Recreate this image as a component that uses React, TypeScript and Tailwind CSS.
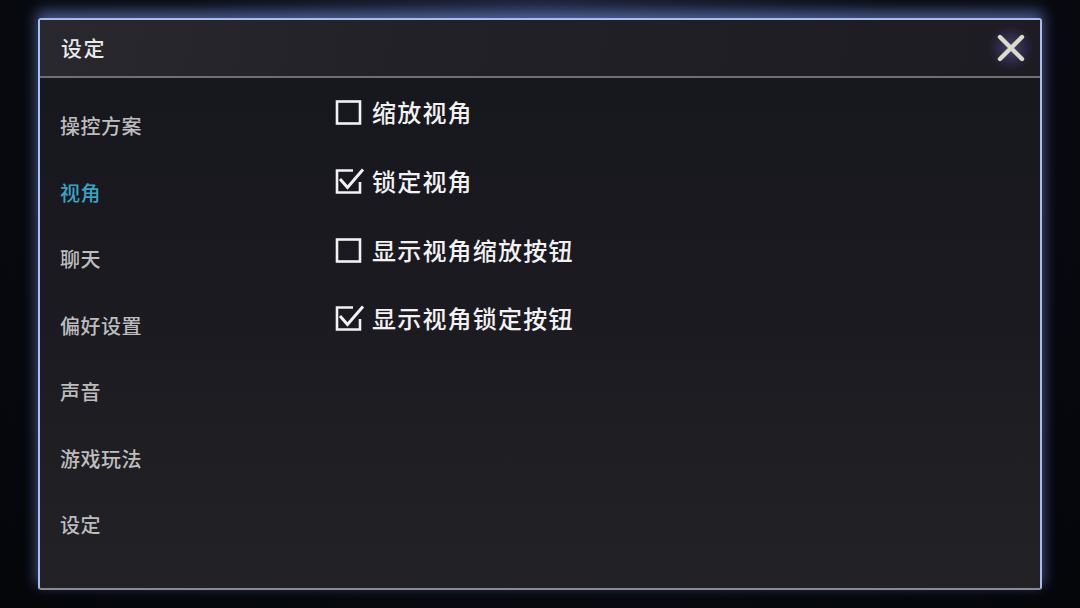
import React, { useState } from 'react';

const FONT = { fontFamily: '"Noto Sans CJK SC", "Noto Sans", sans-serif' };

const menu = ['操控方案', '视角', '聊天', '偏好设置', '声音', '游戏玩法', '设定'];

const initialOptions = [
  { label: '缩放视角', checked: false },
  { label: '锁定视角', checked: true },
  { label: '显示视角缩放按钮', checked: false },
  { label: '显示视角锁定按钮', checked: true },
];

const CheckBox: React.FC<{ checked: boolean }> = ({ checked }) => (
  <svg width="30" height="28" viewBox="0 0 30 28" className="shrink-0 ml-[1px]">
    {checked ? (
      <>
        <path d="M18 3.5 H2 V25.5 H25 V15" fill="none" stroke="#f2f2f2" strokeWidth="2.6" />
        <path d="M5 12 L12.5 20.5 L28 2.5" fill="none" stroke="#f2f2f2" strokeWidth="3" strokeLinejoin="miter" />
      </>
    ) : (
      <rect x="2" y="3.5" width="23" height="22" fill="none" stroke="#f2f2f2" strokeWidth="2.6" />
    )}
  </svg>
);

const App: React.FC = () => {
  const [active, setActive] = useState(1);
  const [options, setOptions] = useState(initialOptions);

  const toggle = (i: number) =>
    setOptions(prev => prev.map((o, j) => (j === i ? { ...o, checked: !o.checked } : o)));

  return (
    <div
      className="w-[1080px] h-[608px] overflow-hidden bg-[radial-gradient(ellipse_at_50%_0%,#1c2238_0%,#0a0c14_45%,#05060a_100%)] pt-[18px] pl-[38px]"
      style={FONT}
    >
      {/* Dialog */}
      <div className="relative w-[1004px] h-[572px] flex flex-col rounded-[3px] border-2 border-[#a9bcf2] border-b-[#8a8a90] shadow-[0_-6px_14px_1px_rgba(120,150,230,0.55)] bg-[linear-gradient(180deg,#16161d_0%,#1a1a20_50%,#222226_100%)]">
        {/* Header */}
        <div className="h-[58px] shrink-0 flex items-center justify-between pl-[21px] pr-[7px] bg-[linear-gradient(100deg,#29282e_0%,#212027_45%,#1d1c22_100%)] border-b-2 border-[#6f6f74]">
          <span className="text-[21px] font-medium text-[#e9e9e9] tracking-[1.5px]">设定</span>
          <button className="relative w-[44px] h-[44px] flex items-center justify-center rounded-full bg-[radial-gradient(circle,rgba(120,110,200,0.45)_0%,rgba(80,70,160,0.15)_55%,transparent_75%)]">
            <svg width="28" height="28" viewBox="0 0 28 28">
              <path d="M3 3 L25 25 M25 3 L3 25" stroke="#dcdccb" strokeWidth="4.4" strokeLinecap="round" />
            </svg>
          </button>
        </div>

        {/* Body */}
        <div className="flex flex-1">
          {/* Menu */}
          <div className="w-[294px] shrink-0 pl-[20px] pt-[15px]">
            {menu.map((m, i) => (
              <div
                key={m}
                onClick={() => setActive(i)}
                className={`h-[66.5px] flex items-center text-[20px] font-medium tracking-[0.5px] cursor-pointer ${
                  i === active ? 'text-[#3aa3c4]' : 'text-[#bdbdbd]'
                }`}
              >
                {m}
              </div>
            ))}
          </div>

          {/* Options */}
          <div className="flex-1">
            {options.map((o, i) => (
              <div
                key={o.label}
                onClick={() => toggle(i)}
                className="h-[68.7px] flex items-center gap-[7px] cursor-pointer"
              >
                <CheckBox checked={o.checked} />
                <span className="text-[24px] font-medium text-[#f2f2f2] tracking-[1.2px]">{o.label}</span>
              </div>
            ))}
          </div>
        </div>
      </div>
    </div>
  );
};

export default App;
